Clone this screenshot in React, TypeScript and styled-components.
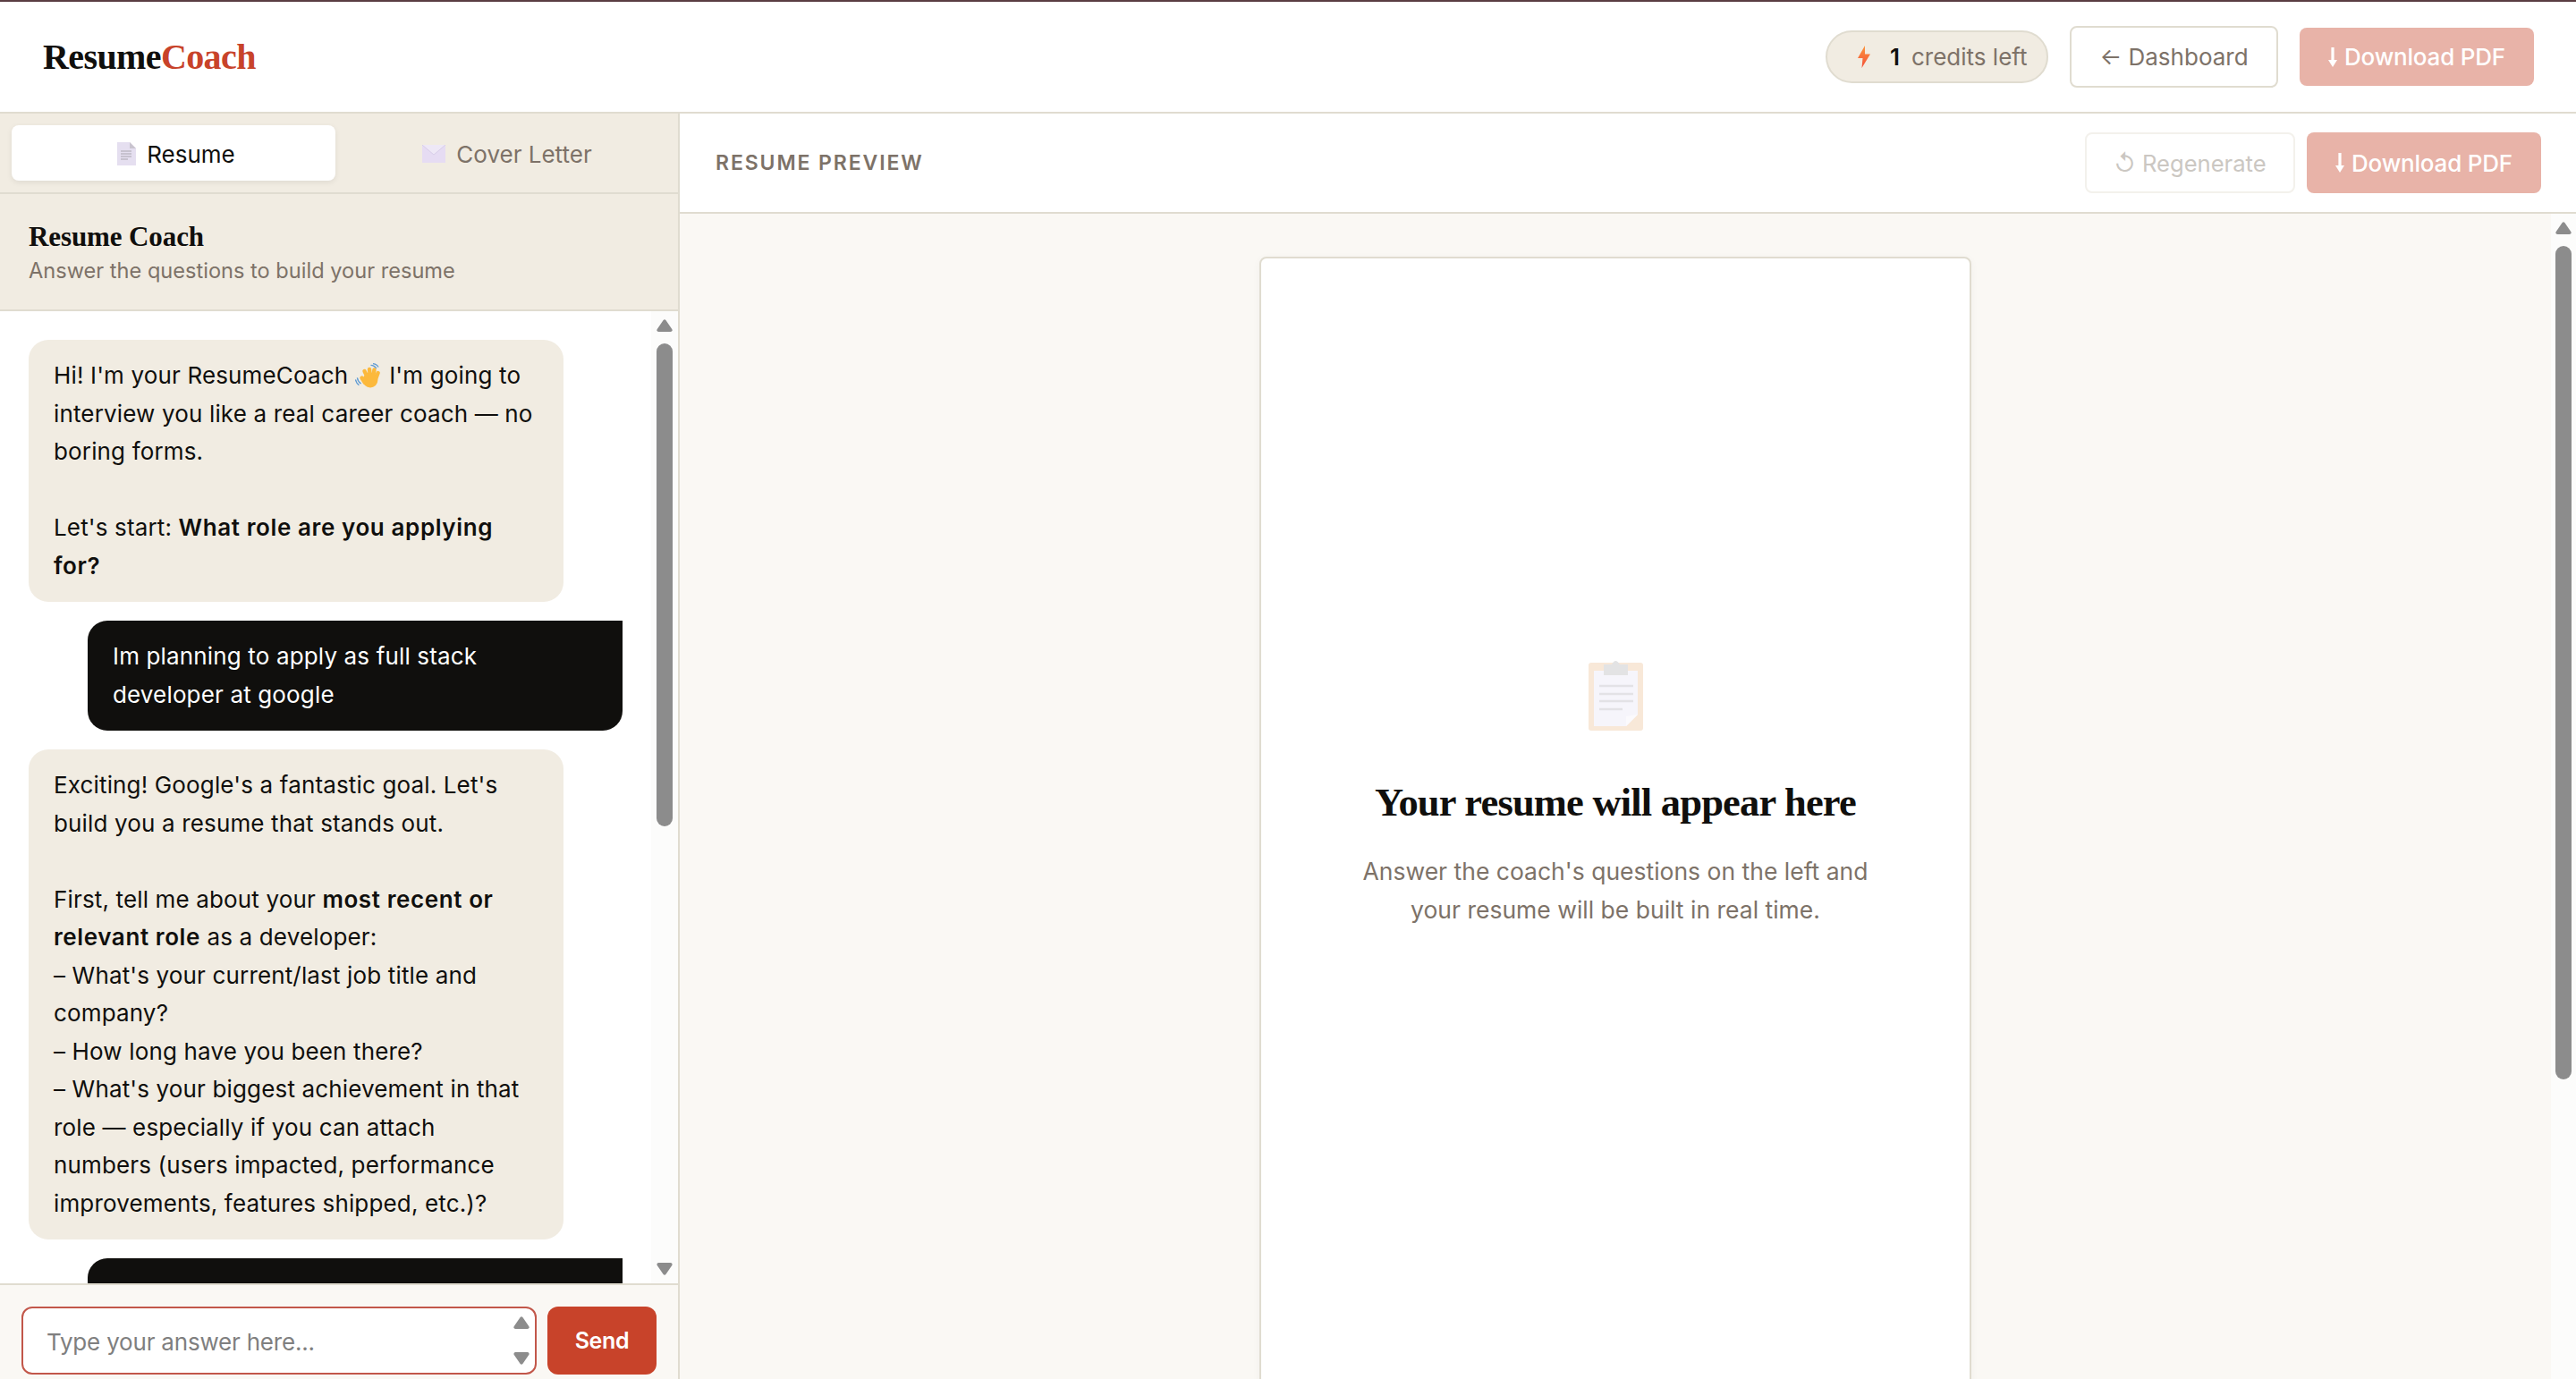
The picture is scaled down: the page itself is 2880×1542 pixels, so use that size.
import React from "react";
import styled, { createGlobalStyle } from "styled-components";

const sans = `"Inter", "Noto Sans", sans-serif`;
const serif = `"Liberation Serif", "DejaVu Serif", serif`;

const GlobalStyle = createGlobalStyle`
  html, body {
    margin: 0;
    padding: 0;
    height: 100%;
    overflow: hidden;
    background: #fff;
    font-family: ${sans};
  }
  #root { height: 100%; }
  * { box-sizing: border-box; }
`;

const Page = styled.div`
  height: 100vh;
  display: flex;
  flex-direction: column;
  border-top: 2px solid #5a3d42;
  color: #100f0d;
`;

const Header = styled.header`
  height: 125px;
  flex: none;
  display: flex;
  align-items: center;
  justify-content: space-between;
  padding: 0 47px 0 48px;
  border-bottom: 2px solid #e0dcd0;
  background: #fff;
`;

const Logo = styled.div`
  font-family: ${serif};
  font-size: 40px;
  font-weight: 700;
  letter-spacing: -0.6px;
  color: #100f0d;
  span { color: #c8432a; }
`;

const HeaderActions = styled.div`
  display: flex;
  align-items: center;
  gap: 24px;
`;

const CreditPill = styled.div`
  width: 249px;
  height: 59px;
  border: 2px solid #e0dcd0;
  border-radius: 30px;
  background: #f1ece2;
  display: flex;
  align-items: center;
  padding-left: 34px;
  font-size: 26px;
  color: #7d7268;
  b {
    margin: 0 13px 0 22px;
    font-weight: 600;
    color: #100f0d;
  }
`;

const Button = styled.button<{ $w: number; $h: number }>`
  width: ${(p) => p.$w}px;
  height: ${(p) => p.$h}px;
  flex: none;
  display: flex;
  align-items: center;
  justify-content: center;
  gap: 8px;
  border-radius: 8px;
  font-family: ${sans};
  font-size: 26px;
  font-weight: 400;
  padding: 0;
`;

const GhostButton = styled(Button)`
  background: #fff;
  border: 2px solid #e0dcd0;
  color: #7d7268;
`;

const FadedGhostButton = styled(GhostButton)`
  border-color: #f3f1ec;
  color: #cbc7c2;
  font-size: 25.6px;
`;

const PrimaryButton = styled(Button)`
  background: #e8b3a8;
  border: none;
  color: #fff;
  font-weight: 500;
  letter-spacing: -0.2px;
`;

const Body = styled.div`
  flex: 1;
  min-height: 0;
  display: flex;
`;

const Sidebar = styled.aside`
  width: 760px;
  flex: none;
  display: flex;
  flex-direction: column;
  border-right: 2px solid #e0dcd0;
`;

const Tabs = styled.div`
  height: 90px;
  flex: none;
  display: grid;
  grid-template-columns: 1fr 1fr;
  gap: 8px;
  padding: 13px;
  background: #f1ece2;
  border-bottom: 2px solid #e0dcd0;
`;

const Tab = styled.div<{ $active?: boolean }>`
  display: flex;
  align-items: center;
  justify-content: center;
  gap: 12px;
  padding: 2px 0 0 6px;
  border-radius: 8px;
  font-size: 26px;
  background: ${(p) => (p.$active ? "#fff" : "transparent")};
  color: ${(p) => (p.$active ? "#100f0d" : "#7d7268")};
  box-shadow: ${(p) => (p.$active ? "0 2px 6px rgba(16,15,13,0.08)" : "none")};
`;

const CoachHead = styled.div`
  height: 131px;
  flex: none;
  padding: 28px 32px 0;
  background: #f1ece2;
  border-bottom: 2px solid #e0dcd0;
`;

const CoachTitle = styled.div`
  font-family: ${serif};
  font-size: 31px;
  font-weight: 700;
  letter-spacing: -0.1px;
  line-height: 40px;
`;

const CoachSub = styled.div`
  margin-top: 1px;
  font-size: 23.6px;
  line-height: 34px;
  color: #7d7268;
`;

const ChatRow = styled.div`
  flex: 1;
  min-height: 0;
  display: flex;
  background: #fff;
`;

const Messages = styled.div`
  flex: 1;
  min-width: 0;
  overflow: hidden;
  display: flex;
  flex-direction: column;
  gap: 21px;
  padding: 32px 32px 0;
`;

const Bubble = styled.div`
  width: 598px;
  flex: none;
  padding: 19px 28px;
  font-size: 26px;
  letter-spacing: 0.15px;
  line-height: 42.5px;
  white-space: nowrap;
  b {
    font-weight: 600;
    letter-spacing: 0.6px;
  }
`;

const CoachBubble = styled(Bubble)`
  background: #f1ece2;
  color: #100f0d;
  border-radius: 22px;
`;

const UserBubble = styled(Bubble)`
  align-self: flex-end;
  background: #100f0d;
  color: #fff;
  border-radius: 22px 0 22px 22px;
`;

const Track = styled.div<{ $w: number }>`
  width: ${(p) => p.$w}px;
  flex: none;
  display: flex;
  flex-direction: column;
  align-items: center;
  padding: 9px 0;
  background: #fcfcfb;
`;

const Thumb = styled.div<{ $h: number }>`
  width: 18px;
  height: ${(p) => p.$h}px;
  margin-top: 13px;
  border-radius: 9px;
  background: #8c8c8c;
`;

const ArrowSvg = styled.svg<{ $down?: boolean }>`
  display: block;
  flex: none;
  transform: ${(p) => (p.$down ? "rotate(180deg)" : "none")};
`;

const Spacer = styled.div`
  flex: 1;
`;

const Composer = styled.div`
  height: 107px;
  flex: none;
  display: flex;
  gap: 12px;
  padding: 24px 24px 0;
  background: #faf8f4;
  border-top: 2px solid #e0dcd0;
`;

const InputBox = styled.div`
  width: 576px;
  height: 76px;
  display: flex;
  align-items: stretch;
  border: 2px solid #c2574a;
  border-radius: 12px;
  background: #fff;
  overflow: hidden;
`;

const AnswerInput = styled.input`
  flex: 1;
  min-width: 0;
  border: none;
  outline: none;
  padding: 2px 0 0 26px;
  font-family: ${sans};
  font-size: 26px;
  letter-spacing: -0.2px;
  background: transparent;
  &::placeholder { color: #7f7f7f; opacity: 1; }
`;

const SpinColumn = styled.div`
  width: 30px;
  flex: none;
  display: flex;
  flex-direction: column;
  justify-content: space-between;
  padding: 9px 6px;
`;

const SendButton = styled.button`
  width: 122px;
  height: 76px;
  border: none;
  border-radius: 12px;
  background: #c8432a;
  color: #fff;
  font-family: ${sans};
  font-size: 25px;
  font-weight: 600;
  letter-spacing: -0.3px;
  padding: 0;
`;

const Main = styled.main`
  flex: 1;
  min-width: 0;
  display: flex;
  flex-direction: column;
`;

const PreviewBar = styled.div`
  height: 112px;
  flex: none;
  display: flex;
  align-items: center;
  justify-content: space-between;
  padding: 0 39px 0 40px;
  background: #fff;
  border-bottom: 2px solid #e0dcd0;
`;

const PreviewLabel = styled.div`
  font-size: 23px;
  font-weight: 600;
  letter-spacing: 1.9px;
  color: #7d7268;
`;

const PreviewActions = styled.div`
  display: flex;
  gap: 13px;
`;

const PreviewRow = styled.div`
  flex: 1;
  min-height: 0;
  display: flex;
  background: #faf8f4;
`;

const PreviewScroll = styled.div`
  flex: 1;
  min-width: 0;
  overflow: hidden;
  display: flex;
  justify-content: center;
  padding-top: 48px;
`;

const Paper = styled.div`
  width: 796px;
  height: 1500px;
  flex: none;
  display: flex;
  flex-direction: column;
  align-items: center;
  padding-top: 448px;
  background: #fff;
  border: 2px solid #e0dcd0;
  border-radius: 8px;
  box-shadow: 0 2px 10px rgba(16, 15, 13, 0.04);
`;

const EmptyTitle = styled.h2`
  margin: 50px 0 0;
  font-family: ${serif};
  font-size: 44.5px;
  font-weight: 700;
  letter-spacing: -0.8px;
  line-height: 60px;
`;

const EmptyText = styled.p`
  margin: 26px 0 0;
  text-align: center;
  font-size: 26.5px;
  line-height: 42.5px;
  color: #7d7268;
`;

const ScrollArrow = ({ down }: { down?: boolean }) => (
  <ArrowSvg $down={down} width="18" height="14" viewBox="0 0 18 14">
    <path
      d="M7.6 1 L0.6 11.2 Q-0.2 14 2.4 14 H15.6 Q18.2 14 17.4 11.2 L10.4 1 Q9 -0.4 7.6 1 Z"
      fill="#8c8c8c"
    />
  </ArrowSvg>
);

const Bolt = () => (
  <svg width="14" height="25" viewBox="0 0 14 25">
    <defs>
      <linearGradient id="bolt" x1="0" y1="0" x2="0" y2="1">
        <stop offset="0" stopColor="#fb953c" />
        <stop offset="1" stopColor="#f4503a" />
      </linearGradient>
    </defs>
    <path d="M8 0 L0 14 H5.5 L4.5 25 L14 9.5 H8 Z" fill="url(#bolt)" />
  </svg>
);

const DownArrow = () => (
  <svg width="10" height="22" viewBox="0 0 10 22">
    <path d="M3.4 0 H6.6 V14 H10 L5 22 L0 14 H3.4 Z" fill="#fff" />
  </svg>
);

const DocIcon = () => (
  <svg width="21" height="26" viewBox="0 0 21 26">
    <path d="M0 0 H14 L21 7 V26 H0 Z" fill="#e5dff0" />
    <path d="M14 0 L21 7 H14 Z" fill="#c9c4cf" />
    <path d="M4 10 H16 M4 13 H16 M4 16 H16 M4 19 H12" stroke="#aaa5ae" strokeWidth="1.2" />
  </svg>
);

const EnvelopeIcon = () => (
  <svg width="26" height="20" viewBox="0 0 26 20">
    <rect width="26" height="20" fill="#e6dcf3" />
    <path d="M0 0 L13 11 L26 0" fill="#eee8f6" stroke="#d3c8e4" strokeWidth="0.8" />
  </svg>
);

const WaveIcon = styled.svg`
  display: inline-block;
  vertical-align: -5px;
  margin: 0 3px 0 0;
`;

const WavingHand = () => (
  <WaveIcon width="28" height="28" viewBox="0 0 28 28">
    <circle cx="17" cy="19" r="8.4" fill="#fcb93c" />
    <g stroke="#fcb93c" strokeWidth="4.4" strokeLinecap="round">
      <path d="M14 16 L10.5 9" />
      <path d="M17 16 L16 7" />
      <path d="M20 16 L21.5 7.5" />
      <path d="M23 18 L25.6 11" />
      <path d="M11 22 L7.5 16.5" />
    </g>
    <path d="M17.5 2.4 Q21.6 2.6 23.8 6" stroke="#5f9bd4" strokeWidth="1.3" fill="none" />
    <path d="M20 0.6 Q24.6 1.4 26 4.6" stroke="#5f9bd4" strokeWidth="1.3" fill="none" />
    <path d="M2.4 16.4 Q3 20.6 6.6 23" stroke="#5f9bd4" strokeWidth="1.3" fill="none" />
    <path d="M0.4 18.4 Q1.4 22.6 4.4 24.6" stroke="#5f9bd4" strokeWidth="1.3" fill="none" />
  </WaveIcon>
);

const ClipboardIcon = () => (
  <svg width="61" height="80" viewBox="0 0 61 80">
    <rect x="0" y="4" width="61" height="76" rx="3" fill="#f8e8d8" />
    <path d="M6 13 H55 V62 L42 75 H6 Z" fill="#f6f5fb" />
    <path d="M55 62 L42 75 V64 Z" fill="#fbfafd" />
    <path d="M17 6 H26 Q30 -2 35 6 H44 V18 H17 Z" fill="#e3e3e4" />
    <path d="M12 30 H50 M12 39 H50 M12 47 H50 M12 56 H38" stroke="#e3e2e6" strokeWidth="2.4" />
  </svg>
);

export default function App() {
  return (
    <Page>
      <GlobalStyle />
      <Header>
        <Logo>
          Resume<span>Coach</span>
        </Logo>
        <HeaderActions>
          <CreditPill>
            <Bolt />
            <b>1</b>credits left
          </CreditPill>
          <GhostButton $w={233} $h={69}>← Dashboard</GhostButton>
          <PrimaryButton $w={262} $h={65}>
            <DownArrow />
            Download PDF
          </PrimaryButton>
        </HeaderActions>
      </Header>
      <Body>
        <Sidebar>
          <Tabs>
            <Tab $active>
              <DocIcon />
              Resume
            </Tab>
            <Tab>
              <EnvelopeIcon />
              Cover Letter
            </Tab>
          </Tabs>
          <CoachHead>
            <CoachTitle>Resume Coach</CoachTitle>
            <CoachSub>Answer the questions to build your resume</CoachSub>
          </CoachHead>
          <ChatRow>
            <Messages>
              <CoachBubble>
                Hi! I'm your ResumeCoach <WavingHand /> I'm going to
                <br />
                interview you like a real career coach — no
                <br />
                boring forms.
                <br />
                <br />
                Let's start: <b>What role are you applying</b>
                <br />
                <b>for?</b>
              </CoachBubble>
              <UserBubble>
                Im planning to apply as full stack
                <br />
                developer at google
              </UserBubble>
              <CoachBubble>
                Exciting! Google's a fantastic goal. Let's
                <br />
                build you a resume that stands out.
                <br />
                <br />
                First, tell me about your <b>most recent or</b>
                <br />
                <b>relevant role</b> as a developer:
                <br />
                – What's your current/last job title and
                <br />
                company?
                <br />
                – How long have you been there?
                <br />
                – What's your biggest achievement in that
                <br />
                role — especially if you can attach
                <br />
                numbers (users impacted, performance
                <br />
                improvements, features shipped, etc.)?
              </CoachBubble>
              <UserBubble>&nbsp;</UserBubble>
            </Messages>
            <Track $w={30}>
              <ScrollArrow />
              <Thumb $h={540} />
              <Spacer />
              <ScrollArrow down />
            </Track>
          </ChatRow>
          <Composer>
            <InputBox>
              <AnswerInput placeholder="Type your answer here..." />
              <SpinColumn>
                <ScrollArrow />
                <ScrollArrow down />
              </SpinColumn>
            </InputBox>
            <SendButton>Send</SendButton>
          </Composer>
        </Sidebar>
        <Main>
          <PreviewBar>
            <PreviewLabel>RESUME PREVIEW</PreviewLabel>
            <PreviewActions>
              <FadedGhostButton $w={235} $h={68}>↺ Regenerate</FadedGhostButton>
              <PrimaryButton $w={262} $h={68}>
                <DownArrow />
                Download PDF
              </PrimaryButton>
            </PreviewActions>
          </PreviewBar>
          <PreviewRow>
            <PreviewScroll>
              <Paper>
                <ClipboardIcon />
                <EmptyTitle>Your resume will appear here</EmptyTitle>
                <EmptyText>
                  Answer the coach's questions on the left and
                  <br />
                  your resume will be built in real time.
                </EmptyText>
              </Paper>
            </PreviewScroll>
            <Track $w={28}>
              <ScrollArrow />
              <Thumb $h={932} />
            </Track>
          </PreviewRow>
        </Main>
      </Body>
    </Page>
  );
}
